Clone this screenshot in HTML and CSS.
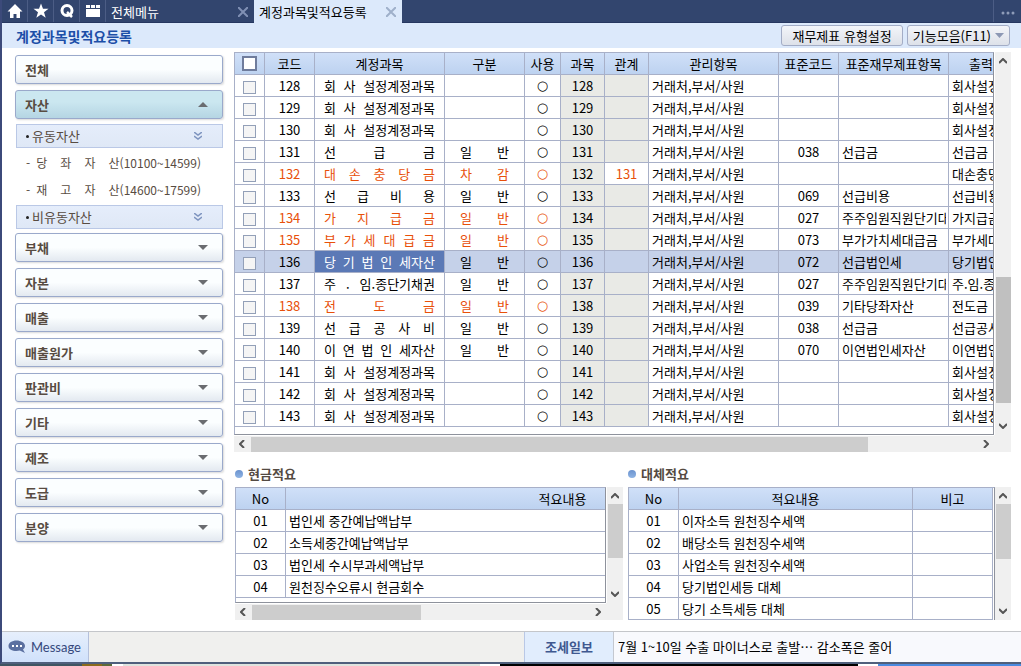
FILE: index.html
```html
<!DOCTYPE html>
<html lang="ko">
<head>
  <meta charset="UTF-8">
  <title>계정과목및적요등록</title>
  <link rel="stylesheet" href="styles.css">
</head>
<body>

  <div class="app">
    <div class="topbar">
      <button class="top-icon" aria-label="홈">
        <svg width="16" height="16" viewBox="0 0 16 16"><path d="M8 1L0.500 8.500H3V15h3.500v-4h3v4H13V8.500h2.500z" fill="#fff"/></svg>
      </button>
      <button class="top-icon" aria-label="즐겨찾기">
        <svg width="16" height="16" viewBox="0 0 16 16"><path d="M8 0.500l2 5.300h5.500L11 9.200l1.700 5.500L8 11.500l-4.700 3.200L5 9.200 0.500 5.800H6z" fill="#fff"/></svg>
      </button>
      <button class="top-icon" aria-label="검색">
        <svg width="16" height="16" viewBox="0 0 16 16"><circle cx="8" cy="7.500" r="5" fill="none" stroke="#fff" stroke-width="3"/><path d="M8 9l5 5" stroke="#fff" stroke-width="2.500"/></svg>
      </button>
      <button class="top-icon" aria-label="메뉴">
        <svg width="16" height="16" viewBox="0 0 16 16"><path d="M1 2h4v3H1zM6 2h4v3H6zM11 2h4v3h-4zM1 6h14v8H1z" fill="#fff"/></svg>
      </button>
      <div class="tab">
        <span>전체메뉴</span>
        <button class="close" aria-label="닫기"><svg width="10" height="10" viewBox="0 0 10 10"><path d="M0 0l10 10M10 0L0 10"/></svg></button>
      </div>
      <div class="tab active">
        <span>계정과목및적요등록</span>
        <button class="close" aria-label="닫기"><svg width="10" height="10" viewBox="0 0 10 10"><path d="M0 0l10 10M10 0L0 10"/></svg></button>
      </div>
      <button class="more" aria-label="더보기">
        <svg width="14" height="4" viewBox="0 0 14 4"><circle cx="2" cy="2" r="1.500"/><circle cx="7" cy="2" r="1.500"/><circle cx="12" cy="2" r="1.500"/></svg>
      </button>
    </div>

    <div class="page-head">
      <h1>계정과목및적요등록</h1>
      <button class="tool">재무제표 유형설정</button>
      <button class="tool drop">기능모음(F11)<svg width="9" height="5" viewBox="0 0 9 5"><path d="M0 0h9L4.500 5z" fill="#8c98b4"/></svg></button>
    </div>

    <div class="body">
      <div class="sidebar">
        <button class="group">전체</button>
        <button class="group open">자산<svg width="10" height="5" viewBox="0 0 10 5"><path d="M0 5h10L5 0z"/></svg></button>
        <div class="sub">
          <button class="sub-head"><span><i class="dot"></i>유동자산</span><svg width="8" height="8" viewBox="0 0 8 8"><path d="M0 0l4 3 4-3M0 4l4 3 4-3"/></svg></button>
          <ul>
            <li>-<a href="#">당 좌 자 산(10100~14599)</a></li>
            <li>-<a href="#">재 고 자 산(14600~17599)</a></li>
          </ul>
          <button class="sub-head"><span><i class="dot"></i>비유동자산</span><svg width="8" height="8" viewBox="0 0 8 8"><path d="M0 0l4 3 4-3M0 4l4 3 4-3"/></svg></button>
        </div>
        <button class="group">부채<svg width="10" height="5" viewBox="0 0 10 5"><path d="M0 0h10L5 5z"/></svg></button>
        <button class="group">자본<svg width="10" height="5" viewBox="0 0 10 5"><path d="M0 0h10L5 5z"/></svg></button>
        <button class="group">매출<svg width="10" height="5" viewBox="0 0 10 5"><path d="M0 0h10L5 5z"/></svg></button>
        <button class="group">매출원가<svg width="10" height="5" viewBox="0 0 10 5"><path d="M0 0h10L5 5z"/></svg></button>
        <button class="group">판관비<svg width="10" height="5" viewBox="0 0 10 5"><path d="M0 0h10L5 5z"/></svg></button>
        <button class="group">기타<svg width="10" height="5" viewBox="0 0 10 5"><path d="M0 0h10L5 5z"/></svg></button>
        <button class="group">제조<svg width="10" height="5" viewBox="0 0 10 5"><path d="M0 0h10L5 5z"/></svg></button>
        <button class="group">도급<svg width="10" height="5" viewBox="0 0 10 5"><path d="M0 0h10L5 5z"/></svg></button>
        <button class="group">분양<svg width="10" height="5" viewBox="0 0 10 5"><path d="M0 0h10L5 5z"/></svg></button>
      </div>

      <div class="content">
        <div class="grid-box">
          <div class="grid main-grid">
            <table>
              <colgroup>
                <col class="w30"><col class="w50"><col class="w130"><col class="w80"><col class="w36"><col class="w44"><col class="w44"><col class="w130"><col class="w60"><col class="w110"><col class="w100">
              </colgroup>
              <thead>
                <tr>
                  <th><input type="checkbox" class="all" aria-label="전체 선택"></th>
                  <th>코드</th><th>계정과목</th><th>구분</th><th>사용</th><th>과목</th><th>관계</th><th>관리항목</th><th>표준코드</th><th>표준재무제표항목</th><th class="out">출력</th>
                </tr>
              </thead>
              <tbody id="accounts"></tbody>
            </table>
          </div>
          <div class="vscroll">
            <svg width="8" height="6" viewBox="0 0 8 6"><path d="M0 5l4-4 4 4"/></svg>
            <div class="track"><div class="thumb v-main"></div></div>
            <svg width="8" height="6" viewBox="0 0 8 6"><path d="M0 1l4 4 4-4"/></svg>
          </div>
          <div class="hscroll">
            <svg width="6" height="8" viewBox="0 0 6 8"><path d="M5 0L1 4l4 4"/></svg>
            <div class="track"><div class="thumb h-main"></div></div>
            <svg width="6" height="8" viewBox="0 0 6 8"><path d="M1 0l4 4-4 4"/></svg>
          </div>
          <div class="corner"></div>
        </div>

        <div class="notes">
          <div class="note cash">
            <h2>현금적요</h2>
            <div class="grid-box">
              <div class="grid">
                <table>
                  <colgroup><col class="w50"><col class="w554"></colgroup>
                  <thead><tr><th>No</th><th>적요내용</th></tr></thead>
                  <tbody>
                    <tr><td>01</td><td class="left">법인세 중간예납액납부</td></tr>
                    <tr><td>02</td><td class="left">소득세중간예납액납부</td></tr>
                    <tr><td>03</td><td class="left">법인세 수시부과세액납부</td></tr>
                    <tr><td>04</td><td class="left">원천징수오류시 현금회수</td></tr>
                  </tbody>
                </table>
              </div>
              <div class="vscroll">
                <svg width="8" height="6" viewBox="0 0 8 6"><path d="M0 5l4-4 4 4"/></svg>
                <div class="track"><div class="thumb v-cash"></div></div>
                <svg width="8" height="6" viewBox="0 0 8 6"><path d="M0 1l4 4 4-4"/></svg>
              </div>
              <div class="hscroll">
                <svg width="6" height="8" viewBox="0 0 6 8"><path d="M5 0L1 4l4 4"/></svg>
                <div class="track"><div class="thumb h-cash"></div></div>
                <svg width="6" height="8" viewBox="0 0 6 8"><path d="M1 0l4 4-4 4"/></svg>
              </div>
              <div class="corner"></div>
            </div>
          </div>

          <div class="note transfer">
            <h2>대체적요</h2>
            <div class="grid-box">
              <div class="grid">
                <table class="fluid">
                  <colgroup><col class="w50"><col><col class="w80"></colgroup>
                  <thead><tr><th>No</th><th>적요내용</th><th>비고</th></tr></thead>
                  <tbody>
                    <tr><td>01</td><td class="left">이자소득 원천징수세액</td><td></td></tr>
                    <tr><td>02</td><td class="left">배당소득 원천징수세액</td><td></td></tr>
                    <tr><td>03</td><td class="left">사업소득 원천징수세액</td><td></td></tr>
                    <tr><td>04</td><td class="left">당기법인세등 대체</td><td></td></tr>
                    <tr><td>05</td><td class="left">당기 소득세등 대체</td><td></td></tr>
                  </tbody>
                </table>
              </div>
              <div class="vscroll">
                <svg width="8" height="6" viewBox="0 0 8 6"><path d="M0 5l4-4 4 4"/></svg>
                <div class="track"><div class="thumb v-transfer"></div></div>
                <svg width="8" height="6" viewBox="0 0 8 6"><path d="M0 1l4 4 4-4"/></svg>
              </div>
            </div>
          </div>
        </div>
      </div>
    </div>

    <div class="statusbar">
      <button class="message">
        <svg width="18" height="14" viewBox="0 0 18 14"><path d="M8.500 0.500C4 0.500 0.500 2.800 0.500 6s3.500 5 8 5c1.200 0 2.300-.1 3.300-.4L17 13l-2-3.500c1.200-.8 2-2 2-3.500 0-3.200-4-5.500-8.500-5.500z" fill="#5b70a0"/><path d="M4 5h2v2H4zM8 5h2v2H8zM12 5h2v2h-2z" fill="#fff"/></svg>
        Message
      </button>
      <div class="blank"></div>
      <div class="news-name">조세일보</div>
      <div class="news">7월 1~10일 수출 마이너스로 출발… 감소폭은 줄어</div>
    </div>
  </div>
  <div class="desktop"></div>

  <script>
    // code, name, type, related, std code, std item, output name, style
    const accounts = [
      ['128', '회 사 설정계정과목', '', '', '', '', '회사설정계정과목', ''],
      ['129', '회 사 설정계정과목', '', '', '', '', '회사설정계정과목', ''],
      ['130', '회 사 설정계정과목', '', '', '', '', '회사설정계정과목', ''],
      ['131', '선 급 금', '일 반', '', '038', '선급금', '선급금', ''],
      ['132', '대 손 충 당 금', '차 감', '131', '', '', '대손충당금', 'red'],
      ['133', '선 급 비 용', '일 반', '', '069', '선급비용', '선급비용', ''],
      ['134', '가 지 급 금', '일 반', '', '027', '주주임원직원단기대여금', '가지급금', 'red'],
      ['135', '부 가 세 대 급 금', '일 반', '', '073', '부가가치세대급금', '부가세대급금', 'red'],
      ['136', '당 기 법 인 세자산', '일 반', '', '072', '선급법인세', '당기법인세자산', 'selected'],
      ['137', '주 . 임.종단기채권', '일 반', '', '027', '주주임원직원단기대여금', '주.임.종단기채권', ''],
      ['138', '전 도 금', '일 반', '', '039', '기타당좌자산', '전도금', 'red'],
      ['139', '선 급 공 사 비', '일 반', '', '038', '선급금', '선급공사비', ''],
      ['140', '이 연 법 인 세자산', '일 반', '', '070', '이연법인세자산', '이연법인세자산', ''],
      ['141', '회 사 설정계정과목', '', '', '', '', '회사설정계정과목', ''],
      ['142', '회 사 설정계정과목', '', '', '', '', '회사설정계정과목', ''],
      ['143', '회 사 설정계정과목', '', '', '', '', '회사설정계정과목', '']
    ];

    document.getElementById('accounts').innerHTML = accounts.map(a => `
      <tr class="${a[7]}">
        <td><input type="checkbox" aria-label="${a[0]}"></td>
        <td class="hot">${a[0]}</td>
        <td class="hot name">${a[1]}</td>
        <td class="hot type">${a[2]}</td>
        <td class="hot use">○</td>
        <td class="gray">${a[0]}</td>
        <td class="hot ${a[3] ? '' : 'gray'}">${a[3]}</td>
        <td class="left">거래처,부서/사원</td>
        <td>${a[4]}</td>
        <td class="left"><div class="cut">${a[5]}</div></td>
        <td class="left">${a[6]}</td>
      </tr>`).join('');
  </script>
</body>
</html>
```
FILE: styles.css
```css
* {
  box-sizing: border-box;
}

body {
  margin: 0;
  min-height: 100vh;
  display: flex;
  flex-direction: column;
  font-family: 'Noto Sans CJK KR', sans-serif;
  font-size: 13px;
  line-height: 20px;
  color: #000;
  background: #fff;
}

button {
  font: inherit;
  color: inherit;
  margin: 0;
  padding: 0;
  border: none;
  background: none;
  cursor: pointer;
}

.app {
  flex: 1;
  display: flex;
  flex-direction: column;
  border-left: 2px solid #3c4a7a;
  border-bottom: 2px solid #4f5f7c;
}

/* top tabs */
.topbar {
  display: flex;
  height: 23px;
  background: #32456e;
  border-bottom: 1px solid #263760;
}

.top-icon {
  width: 26px;
  display: flex;
  align-items: center;
  justify-content: center;
  border-right: 1px solid #4c5d85;
}

.tab {
  width: 148px;
  height: 23px;
  display: flex;
  align-items: center;
  justify-content: space-between;
  padding: 0 6px 0 5px;
  color: #fff;
}

.tab.active {
  color: #000;
  background: #dce9fb;
}

.close {
  display: flex;
}

.close path {
  stroke: #8090b4;
  stroke-width: 2;
}

.active .close path {
  stroke: #9fb0ca;
}

.more {
  margin-left: auto;
  width: 28px;
  padding-top: 4px;
  border-left: 1px solid #4c5d85;
  display: flex;
  align-items: center;
  justify-content: center;
}

.more circle {
  fill: #8e9bb8;
}

.page-head {
  display: flex;
  align-items: center;
  gap: 4px;
  height: 25px;
  padding: 0 11px 0 14px;
  background: #dce9fb;
}

h1 {
  margin: 0 auto 0 0;
  font-size: 14px;
  line-height: 20px;
  font-weight: bold;
  color: #1c4fa8;
}

.tool {
  height: 21px;
  padding: 0 10px;
  border: 1px solid #a3adc6;
  border-radius: 3px;
  background: linear-gradient(#f3f5f9, #dde1e9);
  line-height: 18px;
}

.drop {
  display: flex;
  align-items: center;
  gap: 4px;
  padding: 0 5px;
}

.body {
  flex: 1;
  display: flex;
}

/* left menu */
.sidebar {
  width: 232px;
  flex: none;
  padding: 7px 11px 0 13px;
  color: #584c42;
}

.group {
  display: flex;
  align-items: center;
  justify-content: space-between;
  width: 100%;
  height: 29px;
  margin-bottom: 6px;
  padding: 0 14px 0 9px;
  border: 1px solid #9aa9cb;
  border-radius: 3px;
  background: linear-gradient(#fbfeff 50%, #e3e9f0);
  box-shadow: 1px 1px 2px rgba(0,0,0,0.15);
  line-height: 26px;
  font-weight: bold;
}

.group path {
  fill: #6a6c70;
}

.group.open {
  margin-bottom: 5px;
  background: linear-gradient(#cbe7f0 40%, #b5d5e3);
}

.sub {
  padding-left: 1px;
  margin-bottom: 4px;
}

.sub-head {
  display: flex;
  align-items: center;
  justify-content: space-between;
  width: 100%;
  height: 24px;
  padding: 0 20px 0 9px;
  border: 1px solid #bac8e6;
  background: linear-gradient(#e5edfb, #dfe8f6);
}

.sub-head span {
  display: flex;
  align-items: center;
  gap: 3px;
}

.dot {
  width: 3px;
  height: 3px;
  border-radius: 50%;
  background: #222;
}

.sub-head path {
  fill: none;
  stroke: #7f95c0;
  stroke-width: 1.5;
}

.sub ul {
  list-style: none;
  margin: 0;
  padding: 1px 22px 2px 10px;
}

.sub li {
  display: flex;
  gap: 6px;
  font-size: 12px;
  line-height: 27px;
}

.sub a {
  flex: 1;
  color: inherit;
  text-decoration: none;
  text-align-last: justify;
}

/* tables */
.content {
  flex: 1;
  min-width: 0;
  padding: 4px 10px 0 0;
}

.grid-box {
  display: grid;
  grid-template-columns: minmax(0, 1fr) 16px;
  column-gap: 1px;
  row-gap: 1px;
}

.transfer .grid-box {
  column-gap: 0;
}

.grid {
  overflow: hidden;
  border: 1px solid #a8b0c8;
  border-right-color: #8e929c;
  border-bottom-color: #8e929c;
}

.main-grid {
  padding-bottom: 7px;
}

table {
  table-layout: fixed;
  border-collapse: separate;
  border-spacing: 0;
  width: 0;
}

table.fluid {
  width: 100%;
}

.w30 { width: 30px; }
.w36 { width: 36px; }
.w44 { width: 44px; }
.w50 { width: 50px; }
.w60 { width: 60px; }
.w80 { width: 80px; }
.w100 { width: 100px; }
.w110 { width: 110px; }
.w130 { width: 130px; }
.w554 { width: 554px; }

th, td {
  height: 22px;
  padding: 0;
  border-right: 1px solid #a8b0c8;
  border-bottom: 1px solid #a8b0c8;
  text-align: center;
  font-weight: normal;
  line-height: 20px;
  white-space: nowrap;
  overflow: hidden;
}

th {
  background: linear-gradient(#d0e0f8, #bdd2f0);
}

th.out {
  padding-left: 20px;
  text-align: left;
}

td.left {
  padding-left: 3px;
  text-align: left;
}

td.name {
  padding: 0 9px;
  text-align-last: justify;
}

td.type {
  padding: 0 15px;
  text-align-last: justify;
}

td.use {
  font-family: 'DejaVu Sans', sans-serif;
}

td.gray {
  background: #e9eae6;
}

.cut {
  margin-right: 2px;
  overflow: hidden;
}

.red .hot {
  color: #e8500a;
}

.selected td {
  background: #c5d1e9;
}

.selected .name {
  color: #fff;
  background: #5b79b6;
}

input[type="checkbox"] {
  appearance: none;
  display: block;
  width: 13px;
  height: 13px;
  margin: 3px auto 0;
  border: 1px solid #93a0b8;
  background: #f5f5f5;
}

input[type="checkbox"].all {
  width: 15px;
  height: 15px;
  margin-top: 0;
  border: 2px solid #6f7c9c;
  background: #fff;
}

/* scroll bars */
.vscroll, .hscroll {
  display: flex;
  align-items: center;
  background: #f0f0f0;
}

.vscroll {
  flex-direction: column;
  padding: 6px 0;
  gap: 5px;
}

.hscroll {
  height: 16px;
  padding: 0 5px;
  gap: 6px;
}

.vscroll svg, .hscroll svg {
  flex: none;
}

.vscroll path, .hscroll path {
  fill: none;
  stroke: #555;
  stroke-width: 2;
}

.track {
  flex: 1;
  display: flex;
}

.vscroll .track {
  flex-direction: column;
  width: 15px;
}

.hscroll .track {
  height: 15px;
}

.thumb {
  background: #cdcdcd;
}

.v-main {
  height: 36%;
  margin-top: auto;
  margin-bottom: 15px;
  background: #c0c0c0;
}

.h-main { width: 85%; }
.v-cash { height: 66%; }
.h-cash { width: 50%; }
.v-transfer { height: 56%; }

.corner {
  margin: -1px 0 0 -1px;
  background: #f0f0f0;
}

/* lower panels */
.notes {
  display: flex;
  gap: 5px;
  padding-left: 1px;
  margin-top: 12px;
}

.note {
  min-width: 0;
}

.cash {
  flex: 388;
}

.transfer {
  flex: 383;
}

.cash .grid {
  padding-bottom: 4px;
}

.transfer .grid {
  padding-right: 1px;
  border-bottom: none;
}

h2 {
  display: flex;
  align-items: center;
  gap: 5px;
  height: 20px;
  margin: 0 0 3px;
  font-size: 13px;
  line-height: 20px;
  font-weight: bold;
  color: #544a42;
}

h2::before {
  content: '';
  width: 8px;
  height: 8px;
  border-radius: 50%;
  background: linear-gradient(#6b93cf, #8fb4e4);
}

/* bottom bar */
.statusbar {
  display: flex;
  height: 31px;
  border-top: 1px solid #c4c6ca;
  background: #f0f0ee;
  line-height: 30px;
}

.message {
  display: flex;
  align-items: center;
  gap: 5px;
  width: 87px;
  padding-left: 6px;
  border-right: 1px solid #b4c0dc;
  background: linear-gradient(#e6effc, #d0e1fb);
  font-family: Lato, sans-serif;
  font-size: 13px;
  color: #35487c;
}

.blank {
  flex: 435;
}

.news-name {
  width: 90px;
  border-left: 1px solid #b9c8e6;
  border-right: 1px solid #c4c8d0;
  background: #e1edfd;
  text-align: center;
  font-weight: bold;
  color: #3f5890;
}

.news {
  flex: 403;
  padding-left: 4px;
  background: #f8f9fd;
  white-space: nowrap;
}

/* sliver of desktop under the window */
.desktop {
  height: 2px;
  background: linear-gradient(90deg, #3f5562 0 8%, #8a6a1c 8% 10%, #5c6a3a 10% 11%, #fff 11% 12%, #dfe4df 12% 47%, #fff 47% 49%, #000 49% 84%, #fff 84% 86%, #4a8ae0 86%);
}
```
